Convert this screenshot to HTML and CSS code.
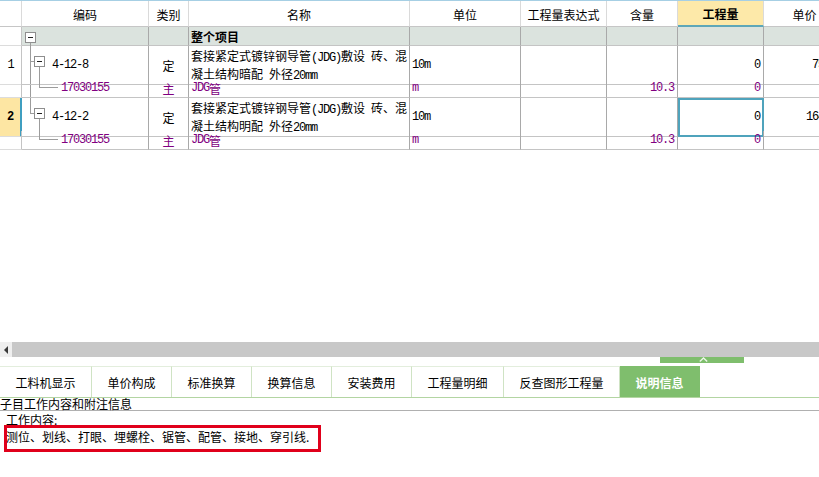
FILE: index.html
```html
<!DOCTYPE html>
<html lang="zh-CN">
<head>
<meta charset="utf-8">
<title>说明信息</title>
<link rel="stylesheet" href="styles.css">
</head>
<body>
<div class="page">
  <div class="grid-area">
    <div class="grid">
      <div class="row head">
        <div class="c num"></div>
        <div class="c">编码</div>
        <div class="c">类别</div>
        <div class="c">名称</div>
        <div class="c">单位</div>
        <div class="c">工程量表达式</div>
        <div class="c">含量</div>
        <div class="c active">工程量</div>
        <div class="c">单价</div>
      </div>

      <div class="row group h19">
        <div class="c num"></div>
        <div class="c code"><span class="box b-g"></span><span class="vl vl-main"></span></div>
        <div class="c"></div>
        <div class="c bold name-c">整个项目</div>
        <div class="c"></div>
        <div class="c"></div>
        <div class="c"></div>
        <div class="c"></div>
        <div class="c"></div>
      </div>

      <div class="row h33">
        <div class="c num mono">1</div>
        <div class="c code lv1"><span class="hl hl-a"></span><span class="box b-1"></span><span class="vl vl-sub"></span><span class="mono">4-12-8</span></div>
        <div class="c center">定</div>
        <div class="c name-c wrap"><div>套接紧定式镀锌钢导管<span class="mono">(JDG)</span>敷设<span class="mono"> </span>砖、混凝土结构暗配<span class="mono"> </span>外径<span class="mono">20mm</span></div></div>
        <div class="c name-c mono">10m</div>
        <div class="c"></div>
        <div class="c"></div>
        <div class="c right mono">0</div>
        <div class="c right mono">75.38</div>
      </div>

      <div class="row h19 sub">
        <div class="c num"></div>
        <div class="c code lv2"><span class="hl hl-b"></span><span class="mono">17030155</span></div>
        <div class="c center">主</div>
        <div class="c name-c"><span class="mono">JDG</span>管</div>
        <div class="c name-c mono">m</div>
        <div class="c"></div>
        <div class="c right mono">10.3</div>
        <div class="c right mono">0</div>
        <div class="c"></div>
      </div>

      <div class="row h33">
        <div class="c num mono cur">2</div>
        <div class="c code lv1"><span class="hl hl-a"></span><span class="box b-1"></span><span class="vl vl-sub"></span><span class="mono">4-12-2</span></div>
        <div class="c center">定</div>
        <div class="c name-c wrap"><div>套接紧定式镀锌钢导管<span class="mono">(JDG)</span>敷设<span class="mono"> </span>砖、混凝土结构明配<span class="mono"> </span>外径<span class="mono">20mm</span></div></div>
        <div class="c name-c mono">10m</div>
        <div class="c"></div>
        <div class="c"></div>
        <div class="c right mono sel">0</div>
        <div class="c right mono">164.69</div>
      </div>

      <div class="row h19 sub">
        <div class="c num"></div>
        <div class="c code lv2"><span class="hl hl-b"></span><span class="mono">17030155</span></div>
        <div class="c center">主</div>
        <div class="c name-c"><span class="mono">JDG</span>管</div>
        <div class="c name-c mono">m</div>
        <div class="c"></div>
        <div class="c right mono">10.3</div>
        <div class="c right mono">0</div>
        <div class="c"></div>
      </div>
    </div>
  </div>

  <div class="hscroll"><div class="sb-btn"><span class="tri"></span></div></div>

  <div class="handle-row">
    <div class="handle">
      <svg width="9" height="5" viewBox="0 0 9 5"><path d="M0.8 4.4 L4.5 1 L8.2 4.4" stroke="#eef7ea" stroke-width="1.4" fill="none"/></svg>
    </div>
  </div>

  <div class="tabs">
    <div class="tab w92">工料机显示</div>
    <div class="tab w80">单价构成</div>
    <div class="tab w80">标准换算</div>
    <div class="tab w80">换算信息</div>
    <div class="tab w80">安装费用</div>
    <div class="tab w92">工程量明细</div>
    <div class="tab w116">反查图形工程量</div>
    <div class="tab w80 on">说明信息</div>
  </div>

  <div class="info-title">子目工作内容和附注信息</div>
  <div class="info-body">
    <div class="line">工作内容:</div>
    <div class="line">测位、划线、打眼、埋螺栓、锯管、配管、接地、穿引线.</div>
    <div class="mark"></div>
  </div>
</div>
</body>
</html>
```

FILE: styles.css
```css
* { box-sizing: border-box; }
html, body { margin: 0; padding: 0; background: #fff; }
body {
  width: 819px;
  height: 477px;
  overflow: hidden;
  font-family: "Noto Sans CJK SC", "Noto Sans", sans-serif;
  font-size: 12px;
  color: #000;
}

.page { display: flex; flex-direction: column; width: 819px; height: 477px; }

.grid-area { height: 342px; overflow: hidden; flex: none; }
.grid { border-top: 1px solid #a6cfe4; width: 846px; }
.row {
  display: grid;
  grid-template-columns: 22px 127px 40px 221px 111px 86px 71px 86px 82px;
}
.c {
  position: relative;
  display: flex;
  align-items: center;
  padding: 0 3px;
  border-right: 1px solid #a9a9a9;
  border-bottom: 1px solid #c4c4c4;
  line-height: 15px;
  white-space: nowrap;
}
.head { height: 26px; }
.head .c {
  justify-content: center;
  border-right-color: #dadada;
  border-bottom-color: #c6c6c6;
  padding-top: 1px;
}
.head .c.active {
  background: #fde9a9;
  border-bottom: 2px solid #5ea7b8;
  font-weight: bold;
}
.h19 { height: 19px; }
.h33 { height: 33px; }
.group .c { background: #dbe3de; }
.group .c.num { background: #fff; }
.num {
  justify-content: center;
  border-right-color: #c4c4c4;
  border-bottom-color: #dcdcdc;
  padding: 0;
}
.num.cur {
  background: #fde6a3;
  border-right: 2px solid #3f9ec0;
  font-weight: bold;
}
.center { justify-content: center; }
.right { justify-content: flex-end; padding-right: 3px; }
.name-c { padding-left: 2px; }
.bold { font-weight: bold; }
.wrap {
  white-space: normal;
  align-items: flex-start;
  padding-top: 2px;
  padding-right: 0;
}
.wrap > div { width: 100%; }
.sub .c { color: #800080; }
.sel { outline: 2px solid #4fa3bc; outline-offset: -2px; }

.mono {
  font-family: "Liberation Mono", "DejaVu Sans Mono", monospace;
  font-size: 12px;
  letter-spacing: -1.2px;
}

/* tree */
.code { padding-left: 0; }
.lv1 { padding-left: 30px; }
.lv2 { padding-left: 39px; }
.box {
  position: absolute;
  width: 11px;
  height: 11px;
  border: 1px solid #8e8e8e;
  background: #fff;
}
.box::after {
  content: "";
  position: absolute;
  left: 2px;
  top: 4px;
  width: 5px;
  height: 1px;
  background: #222;
}
.b-g { left: 3px; top: 5px; }
.b-1 { left: 12px; top: 10px; }
.vl, .hl { position: absolute; background: #9c9c9c; }
.vl { width: 1px; }
.hl { height: 1px; }
.vl-main { left: 8px; top: 16px; height: 71px; }
.vl-sub { left: 17px; top: 21px; height: 21px; }
.hl-a { left: 8px; top: 15px; width: 4px; }
.hl-b { left: 17px; top: 8px; width: 19px; }

/* scrollbar */
.hscroll { height: 15px; background: #c8c8c8; flex: none; display: flex; }
.sb-btn {
  width: 12px;
  height: 15px;
  background: #efefef;
  display: flex;
  align-items: center;
  justify-content: center;
}
.tri {
  width: 0;
  height: 0;
  border-top: 4px solid transparent;
  border-bottom: 4px solid transparent;
  border-right: 4px solid #3a3a3a;
}

.handle-row { height: 9px; flex: none; display: flex; }
.handle {
  margin-left: 660px;
  width: 84px;
  height: 6px;
  background: #7fbe6d;
  display: flex;
  justify-content: center;
  align-items: flex-start;
}
.handle svg { display: block; margin-left: 2px; }

/* tabs */
.tabs {
  display: flex;
  height: 32px;
  border-bottom: 1px solid #b3d5a2;
  flex: none;
}
.tab {
  display: flex;
  align-items: center;
  justify-content: center;
  border-top: 1px solid #e3eedd;
  border-right: 1px solid #cfe3c4;
  font-size: 12px;
}
.w92 { width: 92px; }
.w80 { width: 80px; }
.w116 { width: 116px; }
.tab.on {
  background: #7fbe6d;
  border-top-color: #7fbe6d;
  border-right-color: #7fbe6d;
  color: #fff;
  font-weight: bold;
}

/* info */
.info-title {
  height: 13px;
  line-height: 12px;
  border-bottom: 1px solid #b0b0b0;
  flex: none;
  white-space: nowrap;
}
.info-body { position: relative; flex: 1; padding-left: 6px; }
.line { line-height: 17px; white-space: nowrap; }
.mark {
  position: absolute;
  left: 4px;
  top: 14px;
  width: 317px;
  height: 27px;
  border: 3px solid #e0001b;
}
```
